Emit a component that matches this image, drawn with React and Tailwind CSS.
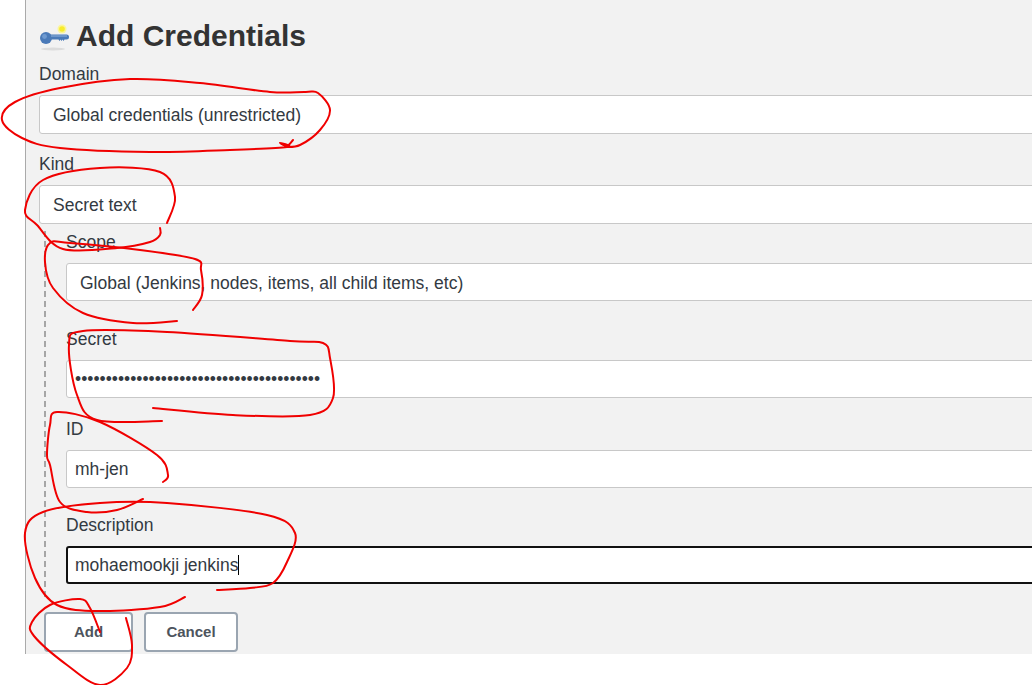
import React from "react";

const font = { fontFamily: '"Liberation Sans", Arial, sans-serif' };

// freehand red pen marks, points read off the screenshot
const marks = [
  [[293,140],[287,146],[280,143],[287,147],[230,150],[150,152],[60,148],[22,138],[2,120],[15,102],[60,88],[130,79],[200,83],[270,92],[305,92],[318,93],[330,110],[320,130],[300,145],[285,147]],
  [[160,228],[160,235],[150,242],[117,248],[63,249],[37,225],[25,210],[43,180],[100,168],[160,172],[175,197],[167,223]],
  [[193,310],[202,295],[201,270],[195,259],[140,250],[70,243],[50,243],[45,262],[53,288],[83,313],[133,323],[177,321]],
  [[162,421],[97,420],[77,395],[69,345],[83,331],[167,332],[290,341],[323,343],[330,358],[333,398],[310,415],[233,415],[153,408]],
  [[163,482],[168,475],[157,455],[100,422],[57,412],[50,425],[47,455],[50,465],[60,502],[87,512],[117,510],[143,499]],
  [[185,597],[160,607],[100,611],[57,605],[35,578],[25,533],[43,512],[100,503],[167,503],[267,515],[295,533],[287,562],[273,583],[250,588],[217,590]],
  [[100,632],[90,608],[80,599],[50,605],[32,622],[34,636],[67,665],[100,685],[127,668],[132,645],[126,618]],
];

const smooth = (pts) => {
  let d = `M${pts[0][0]} ${pts[0][1]}`;
  for (let i = 0; i < pts.length - 1; i++) {
    const p0 = pts[i - 1] || pts[i];
    const p1 = pts[i];
    const p2 = pts[i + 1];
    const p3 = pts[i + 2] || p2;
    const c1x = p1[0] + (p2[0] - p0[0]) / 6;
    const c1y = p1[1] + (p2[1] - p0[1]) / 6;
    const c2x = p2[0] - (p3[0] - p1[0]) / 6;
    const c2y = p2[1] - (p3[1] - p1[1]) / 6;
    d += ` C${c1x} ${c1y} ${c2x} ${c2y} ${p2[0]} ${p2[1]}`;
  }
  return d;
};

const KeyIcon = () => (
  <svg width="30" height="30" viewBox="0 0 30 30" className="shrink-0">
    <ellipse cx="13" cy="27" rx="12" ry="1.5" fill="#dcdcdc" />
    <circle cx="22" cy="7" r="4.5" fill="#fbf59a" />
    <circle cx="22" cy="7" r="2.8" fill="#f8ec2c" />
    <circle cx="6" cy="16" r="6" fill="#4a7ab8" />
    <circle cx="4.5" cy="14.5" r="2.4" fill="#6f9ad0" />
    <path d="M9 12.5h17.5a2.5 2.5 0 0 1 0 5H24.5l-1 1.5-1-1.5-1 1.5-1-1.5-1 1.5-1-1.5H9z" fill="#4a7ab8" />
    <path d="M11 14h16" stroke="#8fb2dd" strokeWidth="1" />
  </svg>
);

const Field = ({ label, value, className = "", focused = false, dots = false, height = "h-[38px]" }) => (
  <div className={className}>
    <div className="h-5 mb-3 text-[17.5px] leading-[22px] text-[#333a42]">{label}</div>
    <div
      className={
        focused
          ? `-mr-10 ${height} flex items-center rounded-[3px] border-2 border-[#111] bg-white px-[7px] text-[17.5px] text-[#333a42]`
          : `-mr-10 ${height} flex items-center rounded-[3px] border border-[#c8c8c8] bg-white text-[17.5px] text-[#333a42] ` + (dots ? "px-2" : "px-[13px] pt-[2px]")
      }
    >
      <span className={focused ? "border-r border-black leading-[20px]" : ""}>{value}</span>
    </div>
  </div>
);

const App = () => {
  return (
    <div className="relative w-[1032px] h-[685px] overflow-hidden bg-white" style={font}>
      <div className="ml-[25px] h-[654px] border-l border-[#aaaaaa] bg-[#f2f2f2] pl-[13px] overflow-hidden">
        <div className="flex items-center h-[62px] pt-[10px]">
          <div className="mt-[2px] ml-[1px]">
            <KeyIcon />
          </div>
          <h1 className="ml-[6px] text-[30px] font-bold leading-9 text-[#333333]">Add Credentials</h1>
        </div>
        <Field label="Domain" value="Global credentials (unrestricted)" height="h-[39px]" className="mt-[1px]" />
        <Field label="Kind" value="Secret text" height="h-[39px]" className="mt-[19px]" />
        <div className="mt-[10px] ml-[5px] border-l-2 border-dashed border-[#a6a6a6] pl-[20px] pb-[13px]">
          <Field label="Scope" value="Global (Jenkins, nodes, items, all child items, etc)" className="-mt-[3px]" />
          <Field label="Secret" value={"•".repeat(40)} dots className="mt-[27px]" />
          <Field label="ID" value="mh-jen" dots className="mt-[20px]" />
          <Field label="Description" value="mohaemookji jenkins" focused className="mt-[26px]" />
        </div>
        <div className="flex gap-[11px] ml-[5px] mt-[15px]">
          <button className="h-10 w-[89px] rounded-[4px] border-2 border-[#9aa5b1] bg-white text-[15px] font-bold text-[#4d545d]">Add</button>
          <button className="h-10 w-[94px] rounded-[4px] border-2 border-[#9aa5b1] bg-white text-[15px] font-bold text-[#4d545d]">Cancel</button>
        </div>
      </div>
      <svg className="absolute inset-0 pointer-events-none" width="1032" height="685" viewBox="0 0 1032 685" fill="none">
        {marks.map((m, i) => (
          <path key={i} d={smooth(m)} stroke="#f00000" strokeWidth="2" strokeLinecap="round" />
        ))}
      </svg>
    </div>
  );
};

export default App;
